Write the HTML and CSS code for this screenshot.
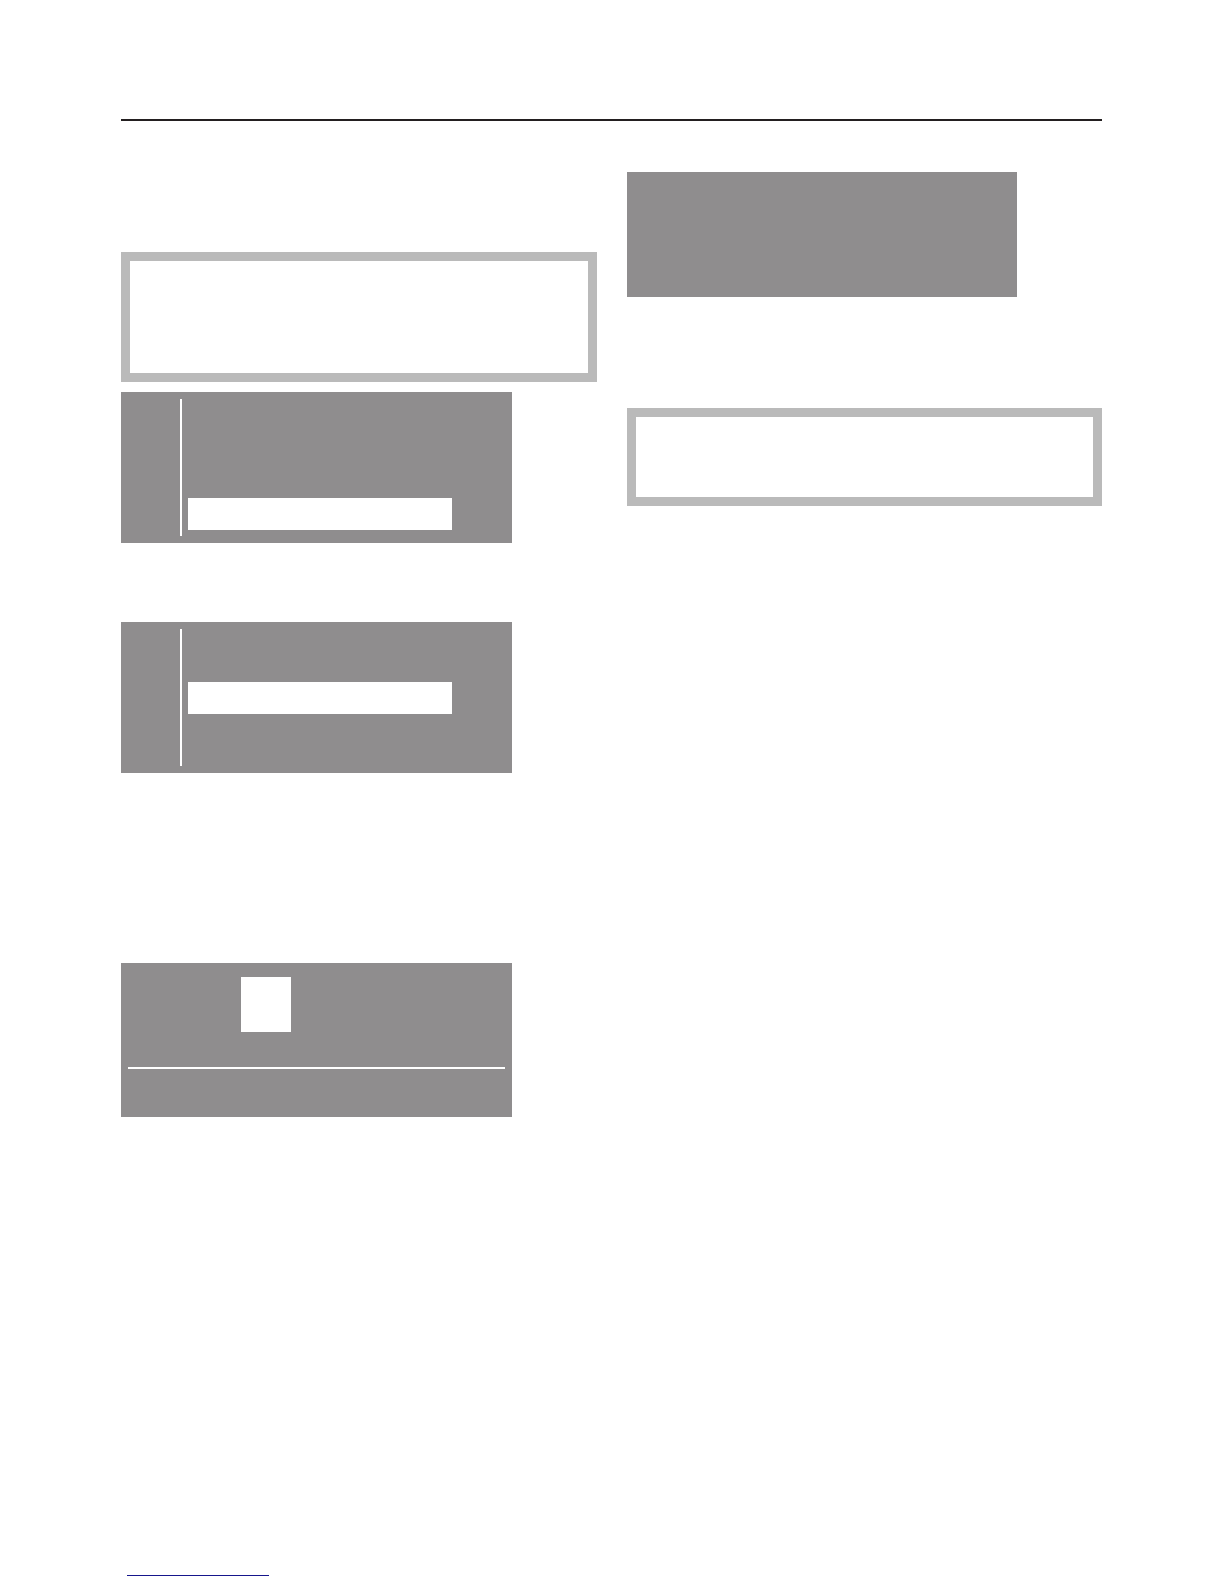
FILE: index.html
```html
<!doctype html>
<html lang="en">
<head>
	<title></title>
	<meta charset="utf-8" />
	<link rel="stylesheet" href="styles.css">
</head>
	<body>
		<hr class="rule" />
		<main class="columns">
			<div class="left">
				<div class="note note-tall"></div>
				<div class="panel menu">
					<div class="item selected last"></div>
				</div>
				<div class="panel menu">
					<div class="item selected"></div>
				</div>
				<div class="panel entry">
					<div class="digit"></div>
					<hr class="divider" />
				</div>
			</div>
			<div class="right">
				<div class="panel message"></div>
				<div class="note"></div>
			</div>
		</main>
		<footer class="footer">
			<a class="link" href="#" aria-label="Contents"></a>
		</footer>
	</body>
</html>
```

FILE: styles.css
```css
* {
	box-sizing: border-box;
}

body {
	margin: 0;
	padding: 119px 122px 0 121px;
	min-height: 100vh;
	display: flex;
	flex-direction: column;
	background-color: #fff;
	font-family: "Liberation Sans", sans-serif;
}

.rule {
	width: 100%;
	height: 2px;
	margin: 0;
	border: 0;
	background-color: #231f20;
}

.columns {
	display: grid;
	grid-template-columns: 1fr 1fr;
	column-gap: 30px;
	padding-top: 51px;
}

.left {
	padding-top: 80px;
}

.note {
	height: 98px;
	border: 9px solid #bababa;
}

.note-tall {
	height: 130px;
	margin-bottom: 10px;
}

.panel {
	max-width: 391px;
	background-color: #8f8d8e;
}

.menu {
	display: flex;
	height: 151px;
	margin-bottom: 79px;
	padding: 7px 60px 7px 59px;
}

/* line between the icon column and the list */
.menu::before {
	content: "";
	width: 2px;
	margin-right: 6px;
	background-color: #fff;
}

.item {
	flex: 1;
	height: 32px;
	margin-top: 53px;
}

.selected {
	background-color: #fff;
}

.last {
	margin-top: 99px;
}

.entry {
	height: 154px;
	margin-top: 190px;
	padding: 14px 7px;
}

.digit {
	width: 50px;
	height: 55px;
	margin-left: 113px;
	background-color: #fff;
}

.divider {
	height: 2px;
	margin: 35px 0 0;
	border: 0;
	background-color: #fff;
}

.message {
	max-width: 390px;
	height: 125px;
	margin-bottom: 111px;
}

.footer {
	margin-top: auto;
	padding: 0 6px 8px;
}

.link {
	display: block;
	width: 142px;
	border-bottom: 1px solid #16168c;
}
```
